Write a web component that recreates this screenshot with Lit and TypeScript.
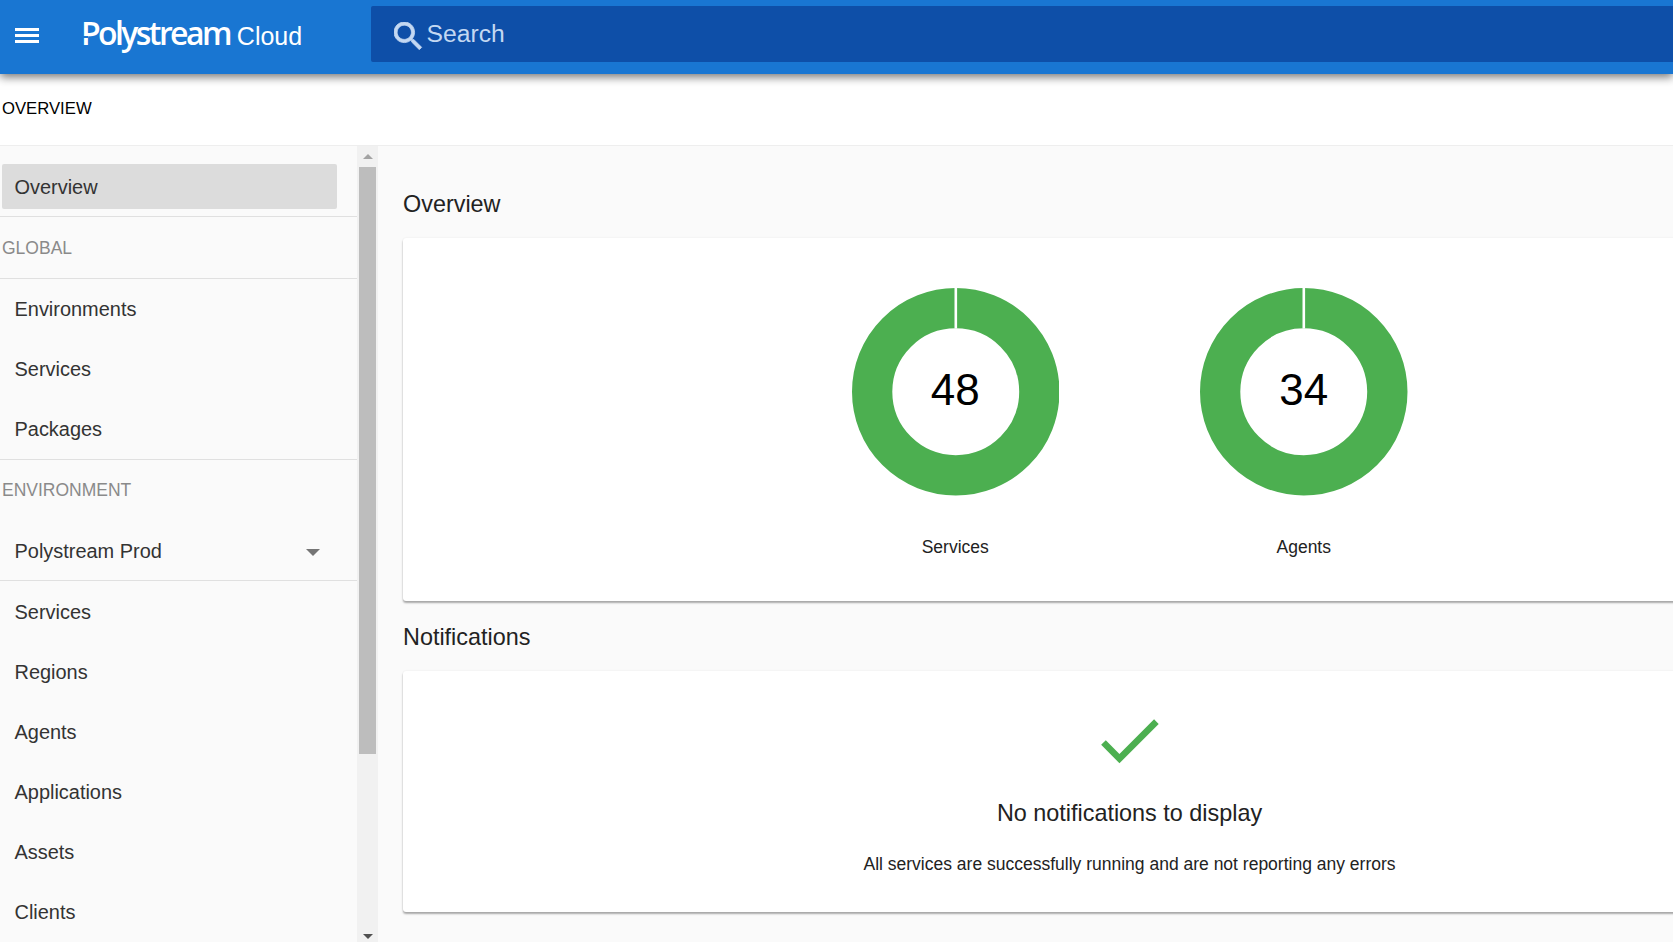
import { LitElement, html, css, svg } from 'lit';
import { customElement } from 'lit/decorators.js';

const globalItems = ['Environments', 'Services', 'Packages'];
const envItems = ['Services', 'Regions', 'Agents', 'Applications', 'Assets', 'Clients'];
const charts = [
  { value: 48, label: 'Services' },
  { value: 34, label: 'Agents' },
];

@customElement('app-root')
export class AppRoot extends LitElement {
  static styles = css`
    :host {
      display: flex;
      flex-direction: column;
      width: 100%;
      height: 942px;
      overflow: hidden;
      background: #fafafa;
      font-family: "Liberation Sans", Arial, sans-serif;
      color: #333;
    }

    .topbar {
      position: relative;
      z-index: 2;
      flex: none;
      height: 74px;
      box-sizing: border-box;
      padding-bottom: 6px;
      display: flex;
      align-items: center;
      background: #1976d2;
      box-shadow: 0 3px 9px rgba(0, 0, 0, 0.55);
    }
    .menu {
      flex: none;
      width: 24px;
      height: 15px;
      margin: 3px 0 0 15px;
      display: flex;
      flex-direction: column;
      justify-content: space-between;
    }
    .menu span {
      display: block;
      height: 3px;
      background: #fff;
    }
    .brand {
      flex: none;
      width: 290px;
      margin: 0 0 4px 42px;
      display: flex;
      align-items: baseline;
      color: #fff;
    }
    .brand-name {
      position: relative;
      font-family: "Open Sans", sans-serif;
      font-weight: 600;
      font-size: 32px;
      letter-spacing: -2.6px;
    }
    .brand-name::after {
      content: "";
      position: absolute;
      left: 0;
      top: 25px;
      width: 7px;
      height: 2px;
      background: #1976d2;
    }
    .brand-sub {
      margin-left: 7px;
      font-size: 25px;
    }
    .search {
      flex: 1;
      height: 56px;
      display: flex;
      align-items: center;
      padding-left: 23px;
      border-radius: 2px 0 0 2px;
      background: #0e4fa8;
      color: #c3d8f2;
      font-size: 24.7px;
    }
    .search svg {
      flex: none;
      width: 28.5px;
      height: 28.5px;
      margin: 4px 4px 0 0;
      fill: currentColor;
      stroke: currentColor;
      stroke-width: 0.5;
    }

    .crumb {
      flex: none;
      height: 72px;
      display: flex;
      align-items: center;
      padding: 0 0 2px 2px;
      box-sizing: border-box;
      background: #fff;
      border-bottom: 1px solid #eeeeee;
      color: #000;
      font-size: 16.7px;
    }

    .body {
      flex: 1;
      min-height: 0;
      display: flex;
    }

    .sidebar {
      flex: none;
      width: 357px;
      overflow: hidden;
      padding-top: 18px;
      box-sizing: border-box;
      background: #fafafa;
    }
    .item {
      height: 60px;
      display: flex;
      align-items: center;
      justify-content: space-between;
      padding: 0 37px 0 14.5px;
      font-size: 19.95px;
    }
    .item.low {
      box-sizing: border-box;
      padding-top: 2px;
    }
    .item.active {
      height: 45px;
      width: 335px;
      box-sizing: border-box;
      margin: 0 0 7px 2px;
      padding: 2px 0 0 12.5px;
      border-radius: 2px;
      background: #dcdcdc;
    }
    .item.ruled {
      height: 61px;
      border-bottom: 1px solid #e0e0e0;
    }
    .section {
      height: 60px;
      display: flex;
      align-items: center;
      padding-left: 2px;
      border-top: 1px solid #e0e0e0;
      color: #8a8a8a;
      font-size: 17.5px;
    }
    .section.ruled {
      height: 63px;
      box-sizing: border-box;
      padding-top: 2px;
      border-bottom: 1px solid #e0e0e0;
    }
    .caret {
      width: 0;
      height: 0;
      margin-top: 3px;
      border-left: 7px solid transparent;
      border-right: 7px solid transparent;
      border-top: 7px solid #757575;
    }

    .scroll {
      flex: none;
      width: 21px;
      display: flex;
      flex-direction: column;
      align-items: center;
      box-sizing: border-box;
      background: #f1f1f1;
    }
    .scroll-up,
    .scroll-down {
      flex: none;
      width: 0;
      height: 0;
      border-left: 5px solid transparent;
      border-right: 5px solid transparent;
    }
    .scroll-up {
      margin-top: 8px;
      margin-bottom: 8px;
      border-bottom: 5px solid #a3a3a3;
    }
    .scroll-thumb {
      flex: none;
      width: 17px;
      height: 587px;
      background: #bdbdbd;
    }
    .scroll-down {
      margin-top: auto;
      margin-bottom: 3px;
      border-top: 5px solid #505050;
    }

    .content {
      flex: none;
      width: 1453px;
      margin-left: 25px;
      padding-top: 43px;
    }
    h2 {
      margin: 0 0 19px;
      height: 30px;
      line-height: 30px;
      font-weight: 400;
      font-size: 23.4px;
      color: #222;
    }
    .card {
      box-sizing: border-box;
      background: #fff;
      border-radius: 3px;
      box-shadow: 0 2px 2px rgba(0, 0, 0, 0.32), 0 0 2px rgba(0, 0, 0, 0.08);
    }
    .charts {
      height: 363px;
      margin-bottom: 21px;
      padding-top: 50px;
      display: flex;
      justify-content: center;
      gap: 141px;
    }
    .chart {
      width: 207.5px;
      text-align: center;
    }
    .ring {
      position: relative;
      height: 208px;
    }
    .ring svg {
      display: block;
      width: 207.5px;
      height: 207.5px;
    }
    .ring-value {
      position: absolute;
      inset: 0 0 4px 0;
      display: flex;
      align-items: center;
      justify-content: center;
      color: #000;
      font-size: 44px;
    }
    .chart-label {
      margin-top: 41px;
      line-height: 20px;
      font-size: 17.5px;
      color: #222;
    }
    .notice {
      height: 241px;
      padding-top: 30px;
      text-align: center;
      color: #222;
    }
    .notice svg {
      display: block;
      width: 78.5px;
      height: 78.5px;
      margin: 0 auto;
      fill: #4caf50;
    }
    .notice-title {
      margin-top: 18px;
      line-height: 30px;
      font-size: 23.4px;
    }
    .notice-text {
      margin-top: 24px;
      line-height: 24px;
      font-size: 17.5px;
    }
  `;

  renderRing(value: number, label: string) {
    return html`
      <div class="chart">
        <div class="ring">
          <svg viewBox="0 0 207.5 207.5">
            ${svg`
              <circle cx="103.75" cy="103.75" r="83.6" fill="none" stroke="#4caf50" stroke-width="40.3"></circle>
              <rect x="102.5" y="0" width="2.6" height="40.5" fill="#fff"></rect>
            `}
          </svg>
          <div class="ring-value">${value}</div>
        </div>
        <div class="chart-label">${label}</div>
      </div>
    `;
  }

  render() {
    return html`
      <header class="topbar">
        <div class="menu"><span></span><span></span><span></span></div>
        <div class="brand">
          <span class="brand-name">Polystream</span>
          <span class="brand-sub">Cloud</span>
        </div>
        <div class="search">
          <svg viewBox="3 3 18 18">
            <path d="M15.5 14h-.79l-.28-.27C15.41 12.59 16 11.11 16 9.5 16 5.91 13.09 3 9.5 3S3 5.91 3 9.5 5.91 16 9.5 16c1.61 0 3.09-.59 4.23-1.57l.27.28v.79l5 4.99L20.49 19l-4.99-5zm-6 0C7.01 14 5 11.99 5 9.5S7.01 5 9.5 5 14 7.01 14 9.5 11.99 14 9.5 14z"></path>
          </svg>
          <span>Search</span>
        </div>
      </header>

      <div class="crumb">OVERVIEW</div>

      <div class="body">
        <nav class="sidebar">
          <div class="item active">Overview</div>
          <div class="section ruled">GLOBAL</div>
          ${globalItems.map((i) => html`<div class="item">${i}</div>`)}
          <div class="section">ENVIRONMENT</div>
          <div class="item low ruled">Polystream Prod <span class="caret"></span></div>
          ${envItems.map((i) => html`<div class="item low">${i}</div>`)}
        </nav>
        <div class="scroll">
          <div class="scroll-up"></div>
          <div class="scroll-thumb"></div>
          <div class="scroll-down"></div>
        </div>
        <main class="content">
          <h2>Overview</h2>
          <section class="card charts">
            ${charts.map((c) => this.renderRing(c.value, c.label))}
          </section>
          <h2>Notifications</h2>
          <section class="card notice">
            <svg viewBox="0 0 24 24">
              <path d="M9 16.17L4.83 12l-1.42 1.41L9 19 21 7l-1.41-1.41z"></path>
            </svg>
            <div class="notice-title">No notifications to display</div>
            <div class="notice-text">All services are successfully running and are not reporting any errors</div>
          </section>
        </main>
      </div>
    `;
  }
}
